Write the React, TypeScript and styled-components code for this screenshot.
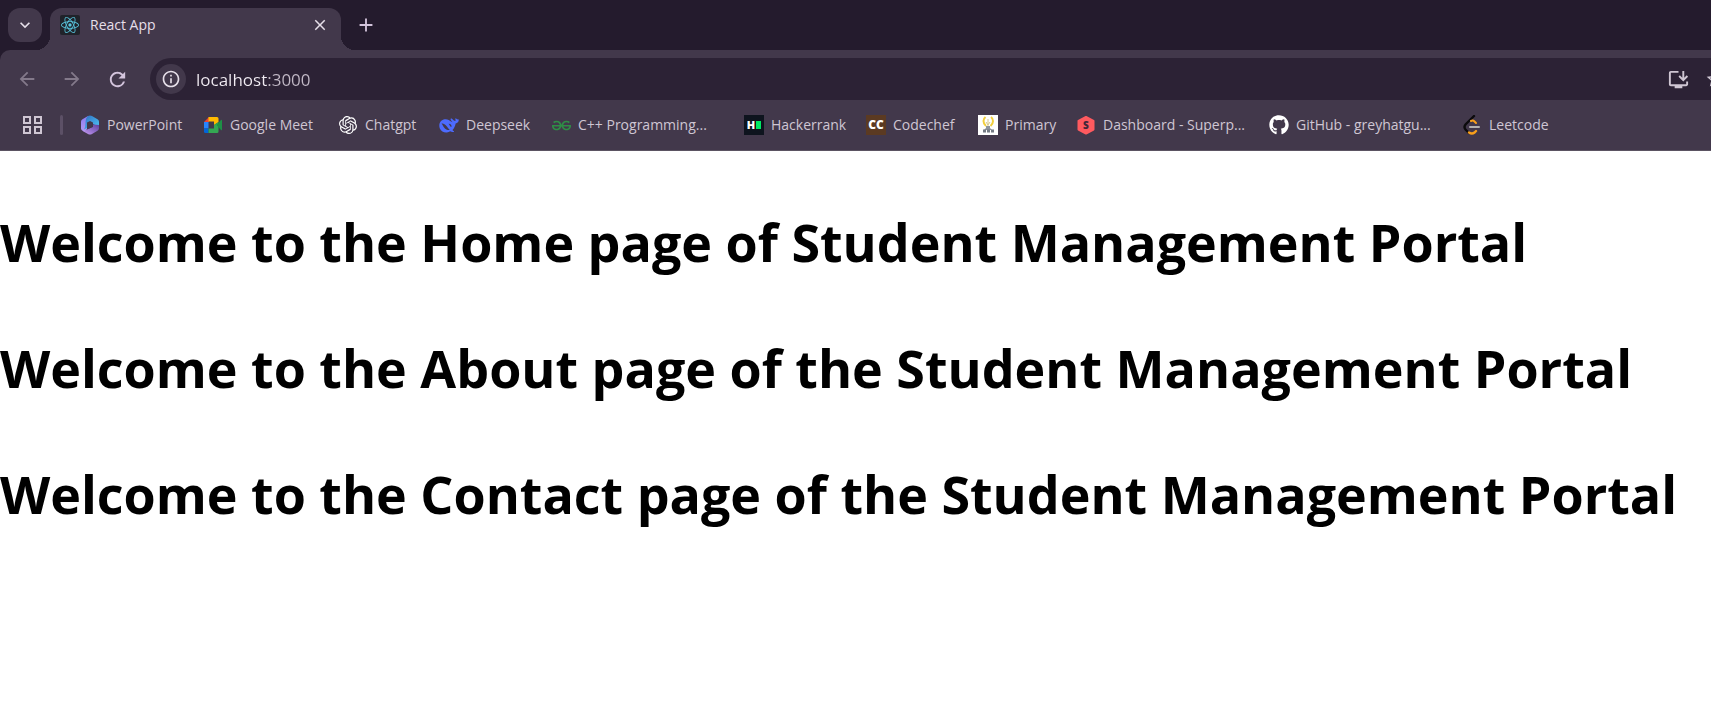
import React from "react";
import styled, { createGlobalStyle } from "styled-components";
import { SiGeeksforgeeks, SiOpenai, SiReact } from "react-icons/si";
import { FaGithub } from "react-icons/fa";
import {
  MdAdd,
  MdArrowBack,
  MdArrowForward,
  MdClose,
  MdInfoOutline,
  MdKeyboardArrowDown,
  MdOutlineInstallDesktop,
  MdRefresh,
  MdStarBorder,
} from "react-icons/md";

const color = {
  strip: "#241b2d",
  chrome: "#42384b",
  field: "#2c2235",
  text: "#e6dfe9",
  accent: "#d3c4dc",
  label: "#cfc6d3",
  dim: "#83798a",
};

const GlobalStyle = createGlobalStyle`
  *, *::before, *::after { box-sizing: border-box; }
  body {
    margin: 0;
    background: #fff;
    font-family: "Open Sans", "Noto Sans", sans-serif;
  }
`;

const Browser = styled.div`
  display: flex;
  flex-direction: column;
  min-height: 100vh;
  overflow: hidden;
`;

const TabStrip = styled.header`
  display: flex;
  align-items: flex-start;
  height: 50px;
  padding: 8px 8px 0;
  background: ${color.strip};
`;

const IconButton = styled.button<{ $size: number; $tone?: string }>`
  display: flex;
  align-items: center;
  justify-content: center;
  flex: none;
  width: ${(p) => p.$size}px;
  height: ${(p) => p.$size}px;
  padding: 0;
  border: 0;
  border-radius: 50%;
  background: transparent;
  color: ${(p) => p.$tone ?? color.text};
`;

const TabSearch = styled(IconButton)`
  border-radius: 12px;
  background: ${color.chrome};
`;

const Tab = styled.div`
  position: relative;
  display: flex;
  align-items: center;
  width: 291px;
  height: 42px;
  margin: 0 8px;
  padding: 0 10px 8px;
  border-radius: 12px 12px 0 0;
  background: ${color.chrome};

  &::before,
  &::after {
    content: "";
    position: absolute;
    bottom: 0;
    width: 14px;
    height: 14px;
  }
  &::before {
    right: 100%;
    background: radial-gradient(circle at 0 0, transparent 14px, ${color.chrome} 14px);
  }
  &::after {
    left: 100%;
    background: radial-gradient(circle at 100% 0, transparent 14px, ${color.chrome} 14px);
  }
`;

const TabIcon = styled.span`
  display: flex;
  align-items: center;
  justify-content: center;
  width: 20px;
  height: 20px;
  border-radius: 2px;
  background: #20232a;
  color: #58c4dc;
`;

const TabTitle = styled.span`
  flex: 1;
  margin-left: 10px;
  font-size: 14px;
  line-height: 20px;
  color: ${color.text};
`;

const ToolbarBacking = styled.div`
  background: ${color.strip};
`;

const Toolbar = styled.nav`
  display: flex;
  align-items: center;
  gap: 13px;
  height: 50px;
  padding: 8px 0 0 11px;
  border-radius: 10px 0 0 0;
  background: ${color.chrome};
  overflow: hidden;
`;

/* The address bar runs on under the window's right edge. */
const AddressBar = styled.form`
  display: flex;
  align-items: center;
  flex: 1;
  height: 42px;
  margin: 0 -40px 0 4px;
  padding: 0 14px 0 6px;
  border-radius: 21px;
  background: ${color.field};
`;

const SiteInfo = styled(IconButton)`
  background: ${color.chrome};
`;

const Address = styled.input`
  flex: 1;
  min-width: 0;
  height: 30px;
  margin: 0 0 0 10px;
  padding: 0;
  border: 0;
  outline: 0;
  font: 17px/24px "Open Sans", "Noto Sans", sans-serif;
  background: linear-gradient(90deg, #f2edf4 72px, #c3bac7 72px);
  background-clip: text;
  -webkit-background-clip: text;
  color: transparent;
`;

const BookmarkBar = styled.nav`
  display: flex;
  align-items: center;
  height: 51px;
  padding-left: 20px;
  border-bottom: 1px solid #5b5362;
  background: ${color.chrome};
`;

const Divider = styled.span`
  flex: none;
  width: 3px;
  height: 20px;
  margin: 0 17px 0 16px;
  border-radius: 2px;
  background: #5c5066;
`;

const Bookmark = styled.a<{ $width: number }>`
  display: flex;
  align-items: center;
  gap: 7px;
  flex: none;
  width: ${(p) => p.$width}px;
  font-size: 14px;
  line-height: 20px;
  white-space: nowrap;
  color: ${color.label};
  text-decoration: none;
`;

const Mark = styled.span<{ $bg?: string; $fg?: string; $text?: number }>`
  display: flex;
  align-items: center;
  justify-content: center;
  flex: none;
  width: 20px;
  height: 20px;
  background: ${(p) => p.$bg ?? "transparent"};
  color: ${(p) => p.$fg ?? "#fff"};
  font-size: ${(p) => p.$text ?? 12}px;
  font-weight: 800;
  line-height: 20px;
`;

const GreenBlock = styled.span`
  width: 5px;
  height: 8px;
  margin-left: 1px;
  background: #00ea64;
`;

const Page = styled.main`
  flex: 1;
  padding-top: 54px;
`;

const Heading = styled.h1`
  margin: 0 0 52px;
  font-size: 52px;
  font-weight: 700;
  line-height: 74px;
  color: #000;
`;

const AppsIcon = () => (
  <svg width="20" height="20" viewBox="0 0 20 20" fill="none" stroke={color.label} strokeWidth="2">
    <rect x="2" y="2" width="6" height="6" />
    <rect x="13" y="2" width="6" height="6" />
    <rect x="2" y="12" width="6" height="6" />
    <rect x="13" y="12" width="6" height="6" />
  </svg>
);

const OfficeIcon = () => (
  <svg width="20" height="20" viewBox="0 0 20 20">
    <defs>
      <linearGradient id="officeLeft" x1="0" y1="0" x2="0" y2="1">
        <stop offset="0" stopColor="#8a7bf0" />
        <stop offset="1" stopColor="#b59af2" />
      </linearGradient>
      <linearGradient id="officeTop" x1="0" y1="0" x2="1" y2="1">
        <stop offset="0" stopColor="#2f6fc4" />
        <stop offset="1" stopColor="#4fc8f4" />
      </linearGradient>
      <linearGradient id="officeBottom" x1="0" y1="1" x2="1" y2="0">
        <stop offset="0" stopColor="#c79bf4" />
        <stop offset="1" stopColor="#5b3f9e" />
      </linearGradient>
    </defs>
    <path d="M8 1 2.5 4.200A3 3 0 0 0 1 6.800V13.500Q1 15 2.500 15.800L5 17 7 14V6z" fill="url(#officeLeft)" />
    <path d="M8 1Q10 0 12 1L17.500 4.200A3 3 0 0 1 19 6.800V12L13 9V7.500L10 6 7 7.500V13L4 14.500Q5.500 12 5.500 8 5.500 3 8 1z" fill="url(#officeTop)" />
    <path d="M19 10V13.500A3 3 0 0 1 17.500 15.800L12 19Q10 20 8 19L3 16.200Q5 16 7 14.500L13 12V9.500z" fill="url(#officeBottom)" />
    <path d="M8 7.500 9 7 13 9.500V11.500L9 13.500 8 13z" fill={color.chrome} />
  </svg>
);

const MeetIcon = () => (
  <svg width="20" height="20" viewBox="0 0 20 20">
    <path d="M1 7 6 2V7z" fill="#ea4335" />
    <path d="M1 7H5.500V13.500H1z" fill="#2684fc" />
    <path d="M1 13.500H5.500V18H2.500A1.500 1.500 0 0 1 1 16.500z" fill="#0066da" />
    <path d="M5.500 2H14A1.500 1.500 0 0 1 15.500 3.500V7L11 10V6.500H5.500z" fill="#ffba00" />
    <path d="M5.500 18H14A1.500 1.500 0 0 0 15.500 16.500V7L11 10V13.500H5.500z" fill="#34a853" />
    <path d="M13.500 10 18 5Q19 4.200 19 5.200V14.800Q19 15.800 18 15z" fill="#1e9146" />
  </svg>
);

const WhaleIcon = () => (
  <svg width="20" height="20" viewBox="0 0 24 24" fill="#4d6bfe">
    <path d="M23.700 5c-.9.600-1.700.3-2.400-.2-.5-.4-.9-1-1.600-1-.2 1.400.4 2.500 0 3.300-.8.500-1.900-.3-2.900-1.300-.8-.9-1.500-1.800-2.300-1.600-1.100.6-.6 1.800.3 2.700l1.500 1.700c-1.600-.6-3.200-1.900-4.600-2.700C8.900 4.600 5.600 4.900 3.200 6.700.3 8.900-.3 12.700 1 16.100c1.500 3.400 5 5.300 8.500 4.900 1.600-.2 2.700-.6 3.900-1.400 1.300.7 2.900 1 4.300.7.700-.3.400-.8-.2-1.200-.8-.4-1.300-.9-1.300-1.200 1.900-2 3.300-4.700 3.800-7.800 2.300-.3 4-1.800 3.700-5.100z" />
    <path d="M3 10.200c2-.5 4.200.7 6 3 1.600 2 2.700 3.700 4 4.700-2.300.3-3.900-.2-5.600-1.500C5.300 14.900 4.700 12 3 10.200z" fill={color.chrome} />
    <path d="M11.500 10.500c1.800-.4 3.600 1.200 3.700 3.300-.9.500-1.700.1-2-.6-.4-1.100-1-1.900-1.700-2.700z" fill={color.chrome} />
  </svg>
);

const BulbIcon = () => (
  <svg width="20" height="20" viewBox="0 0 20 20" fill="none">
    <path d="M8 11Q5.500 9 5.500 6A5 5 0 0 1 7.500 2M12.500 11Q15 9 15 6A5 5 0 0 0 13 2" stroke="#f2cf3d" strokeWidth="2" />
    <path d="M10 4v8M8 7l2 3 2-3" stroke="#d7c98c" />
    <path d="M8 11h4v2l2 2H6l2-2z" fill="#8d949c" />
    <path d="M5 16h11" stroke="#747b84" strokeWidth="3" strokeDasharray="3 1" />
  </svg>
);

const HexagonIcon = () => (
  <svg width="20" height="20" viewBox="0 0 20 20">
    <path d="M10 2 17.500 6V14.500L10 18.500 2.500 14.500V6z" fill="#ff5a5f" stroke="#ff5a5f" strokeWidth="2" strokeLinejoin="round" />
    <text x="10" y="14" textAnchor="middle" fontSize="10" fontWeight="800" fill="#42283a">S</text>
  </svg>
);

const LeetIcon = () => (
  <svg width="20" height="20" viewBox="0 0 20 20" fill="none" strokeWidth="2" strokeLinecap="round">
    <path d="M12 1 3.500 9.500Q1.500 12 3.500 14.500L7 18" stroke="#0b0a0c" strokeWidth="2.400" />
    <path d="M9 6Q11 5 12.500 6.500L14 8" stroke="#f89f1b" />
    <path d="M7 17.500Q10 19.500 12.500 17.500L14 16" stroke="#f89f1b" strokeWidth="2.400" />
    <path d="M8 12H17" stroke="#b3b1b0" />
  </svg>
);

type BookmarkItem = { label: string; width: number; icon: React.ReactNode };

const bookmarks: BookmarkItem[] = [
  { label: "PowerPoint", width: 123, icon: <Mark><OfficeIcon /></Mark> },
  { label: "Google Meet", width: 135, icon: <Mark><MeetIcon /></Mark> },
  { label: "Chatgpt", width: 101, icon: <Mark><SiOpenai size={18} /></Mark> },
  { label: "Deepseek", width: 112, icon: <Mark><WhaleIcon /></Mark> },
  { label: "C++ Programming...", width: 193, icon: <Mark $fg="#2f8d46"><SiGeeksforgeeks size={19} /></Mark> },
  { label: "Hackerrank", width: 122, icon: <Mark $bg="#0e141e" $text={11}>H<GreenBlock /></Mark> },
  { label: "Codechef", width: 112, icon: <Mark $bg="#5b3a22" $text={12}>CC</Mark> },
  { label: "Primary", width: 98, icon: <Mark $bg="#fff"><BulbIcon /></Mark> },
  { label: "Dashboard - Superp...", width: 193, icon: <Mark><HexagonIcon /></Mark> },
  { label: "GitHub - greyhatgu...", width: 193, icon: <Mark><FaGithub size={20} /></Mark> },
  { label: "Leetcode", width: 98, icon: <Mark><LeetIcon /></Mark> },
];

const headings = [
  "Welcome to the Home page of Student Management Portal",
  "Welcome to the About page of the Student Management Portal",
  "Welcome to the Contact page of the Student Management Portal",
];

export default function App() {
  return (
    <Browser>
      <GlobalStyle />
      <TabStrip>
        <TabSearch type="button" $size={34} aria-label="Search tabs">
          <MdKeyboardArrowDown size={20} stroke="currentColor" />
        </TabSearch>
        <Tab>
          <TabIcon><SiReact size={18} /></TabIcon>
          <TabTitle>React App</TabTitle>
          <IconButton type="button" $size={22} aria-label="Close tab">
            <MdClose size={18} />
          </IconButton>
        </Tab>
        <IconButton type="button" $size={34} $tone={color.accent} aria-label="New tab">
          <MdAdd size={22} />
        </IconButton>
      </TabStrip>
      <ToolbarBacking>
        <Toolbar aria-label="Navigation">
          <IconButton type="button" $size={32} $tone={color.dim} aria-label="Back">
            <MdArrowBack size={22} />
          </IconButton>
          <IconButton type="button" $size={32} $tone={color.dim} aria-label="Forward">
            <MdArrowForward size={22} />
          </IconButton>
          <IconButton type="button" $size={32} $tone={color.accent} aria-label="Reload">
            <MdRefresh size={23} />
          </IconButton>
          <AddressBar onSubmit={(e) => e.preventDefault()}>
            <SiteInfo type="button" $size={30} aria-label="Site information">
              <MdInfoOutline size={20} />
            </SiteInfo>
            <Address aria-label="Address" defaultValue="localhost:3000" spellCheck={false} />
            <IconButton type="button" $size={30} $tone={color.label} aria-label="Install app">
              <MdOutlineInstallDesktop size={23} />
            </IconButton>
            <IconButton type="button" $size={44} $tone={color.label} aria-label="Bookmark this page">
              <MdStarBorder size={20} />
            </IconButton>
          </AddressBar>
        </Toolbar>
      </ToolbarBacking>
      <BookmarkBar aria-label="Bookmarks">
        <IconButton type="button" $size={24} $tone={color.label} aria-label="Apps">
          <AppsIcon />
        </IconButton>
        <Divider />
        {bookmarks.map((b) => (
          <Bookmark key={b.label} href="#" $width={b.width}>
            {b.icon}
            {b.label}
          </Bookmark>
        ))}
      </BookmarkBar>
      <Page>
        {headings.map((h) => (
          <Heading key={h}>{h}</Heading>
        ))}
      </Page>
    </Browser>
  );
}
